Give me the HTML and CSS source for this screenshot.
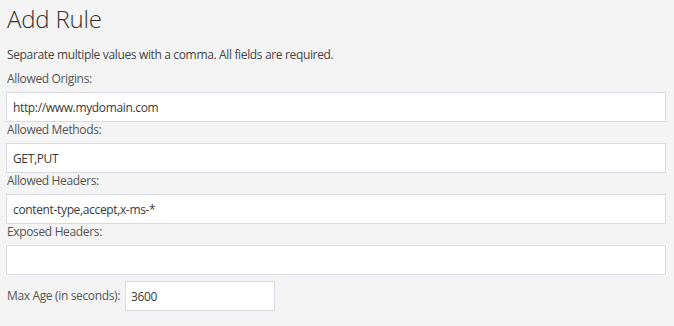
FILE: index.html
```html
<!DOCTYPE html>
<html>
<head>
<meta charset="utf-8">
<link rel="stylesheet" href="styles.css">
</head>
<body>
<div class="page">
  <h1 class="title">Add Rule</h1>
  <p class="hint">Separate multiple values with a comma. All fields are required.</p>
  <div class="field">
    <label class="label">Allowed Origins:</label>
    <input class="input" type="text" value="http://www.mydomain.com">
  </div>
  <div class="field">
    <label class="label">Allowed Methods:</label>
    <input class="input" type="text" value="GET,PUT">
  </div>
  <div class="field">
    <label class="label">Allowed Headers:</label>
    <input class="input" type="text" value="content-type,accept,x-ms-*">
  </div>
  <div class="field">
    <label class="label">Exposed Headers:</label>
    <input class="input" type="text" value="">
  </div>
  <div class="age-row">
    <label class="label age-label">Max Age (in seconds):</label>
    <input class="input age-input" type="text" value="3600">
  </div>
</div>
</body>
</html>
```
FILE: styles.css
```css
html, body {
  margin: 0;
  padding: 0;
  background: #f4f4f4;
}
body {
  font-family: "Open Sans", "Noto Sans", sans-serif;
  font-size: 12px;
  color: #444;
}
.page {
  padding: 0 8px 0 6px;
}
.title {
  margin: 0;
  padding: 3px 0 0 1px;
  font-size: 24px;
  font-weight: 300;
  line-height: 32px;
  color: #333;
  letter-spacing: -0.2px;
}
.hint {
  margin: 12px 0 8px 1px;
  line-height: 16px;
  letter-spacing: -0.35px;
  color: #444;
}
.field {
  display: flex;
  flex-direction: column;
}
.label {
  display: block;
  line-height: 16px;
  margin: 0 0 5px 1px;
  color: #555;
  letter-spacing: -0.35px;
}
.input {
  box-sizing: border-box;
  height: 30px;
  margin: 0;
  padding: 0 6px;
  border: 1px solid #dadae3;
  background: #fff;
  font-family: "Open Sans", "Noto Sans", sans-serif;
  font-size: 12px;
  color: #3a3a3a;
  letter-spacing: -0.35px;
  outline: none;
  width: 100%;
}
.age-row {
  display: flex;
  align-items: center;
  gap: 5px;
  margin-top: 6px;
}
.age-label {
  margin: 0 0 0 1px;
}
.age-input {
  width: 150px;
  padding: 0 5px;
}
```
